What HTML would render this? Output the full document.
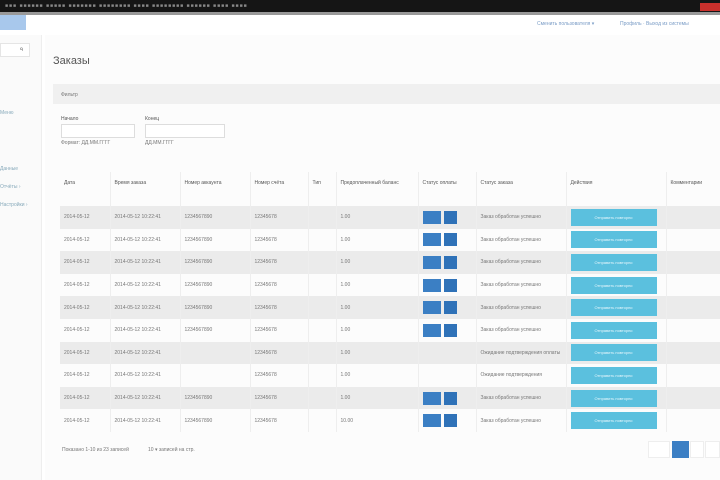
<!DOCTYPE html>
<html><head><meta charset="utf-8"><style>
*{margin:0;padding:0;box-sizing:border-box}
body{width:720px;height:480px;overflow:hidden;background:#fff;font-family:"Liberation Sans",sans-serif;position:relative;color:#666}
.a{position:absolute}
.t{font-size:5px;color:#777;white-space:nowrap}
table{position:absolute;left:60px;top:172px;border-collapse:collapse;table-layout:fixed;width:660px}
td,th{font-size:5px;color:#777;border-right:1px solid #eee;padding:0 4px;text-align:left;white-space:nowrap;overflow:hidden;font-weight:normal}
th{height:34px;vertical-align:top;padding-top:8px;color:#555}
td{height:22.6px}
tr.g td{background:#ebebeb}
.b1{display:inline-block;width:18px;height:13px;background:#3b7fc4;vertical-align:middle}
.b2{display:inline-block;width:13px;height:13px;background:#2f72b8;margin-left:3px;vertical-align:middle}
.c{display:block;width:86px;height:17px;background:#5bc0de;font-size:4px;color:#e8f7fc;line-height:17px;text-align:center}
</style></head><body>
<div class="a" style="left:0;top:0;width:720px;height:12px;background:#151515"></div>
<div class="a" style="left:0;top:12px;width:720px;height:3px;background:#999"></div>
<div class="a" style="left:700px;top:3px;width:20px;height:8px;background:#c9302c"></div>
<div class="a t" style="left:5px;top:3px;color:#888;letter-spacing:1px">■■■ ■■■■■■ ■■■■■ ■■■■■■■ ■■■■■■■■ ■■■■ ■■■■■■■■ ■■■■■■ ■■■■ ■■■■</div>
<div class="a" style="left:0;top:15px;width:26px;height:15px;background:#a8c8ec"></div>
<div class="a t" style="left:537px;top:21px;color:#7a9cc6">Сменить пользователя ▾</div>
<div class="a t" style="left:620px;top:21px;color:#7a9cc6">Профиль · Выход из системы</div>
<div class="a" style="left:0;top:35px;width:42px;height:445px;background:#fafafa;border-right:1px solid #eee"></div>
<div class="a" style="left:0;top:43px;width:30px;height:14px;background:#fff;border:1px solid #e5e5e5"></div>
<div class="a t" style="left:20px;top:47px">ᑫ</div>
<div class="a t" style="left:0;top:110px;color:#8ab">Меню</div>
<div class="a t" style="left:0;top:166px;color:#8ab">Данные</div>
<div class="a t" style="left:0;top:184px;color:#8ab">Отчёты ›</div>
<div class="a t" style="left:0;top:202px;color:#8ab">Настройки ›</div>
<div class="a" style="left:45px;top:35px;width:675px;height:445px;background:#fcfcfc"></div>
<div class="a" style="left:53px;top:55px;font-size:11px;color:#555">Заказы</div>
<div class="a" style="left:53px;top:84px;width:667px;height:20px;background:#f0f0f0"></div>
<div class="a t" style="left:61px;top:92px">Фильтр</div>
<div class="a t" style="left:61px;top:116px;color:#555">Начало</div>
<div class="a" style="left:61px;top:124px;width:74px;height:14px;border:1px solid #ddd;background:#fff"></div>
<div class="a t" style="left:61px;top:140px">Формат: ДД.ММ.ГГГГ</div>
<div class="a t" style="left:145px;top:116px;color:#555">Конец</div>
<div class="a" style="left:145px;top:124px;width:80px;height:14px;border:1px solid #ddd;background:#fff"></div>
<div class="a t" style="left:145px;top:140px">ДД.ММ.ГГГГ</div>
<table>
<colgroup><col style="width:50px"><col style="width:70px"><col style="width:70px"><col style="width:58px"><col style="width:28px"><col style="width:82px"><col style="width:58px"><col style="width:90px"><col style="width:100px"><col style="width:54px"></colgroup>
<tr><th>Дата</th><th>Время заказа</th><th>Номер аккаунта</th><th>Номер счёта</th><th>Тип</th><th>Предоплаченный баланс</th><th>Статус оплаты</th><th>Статус заказа</th><th>Действия</th><th>Комментарии</th></tr>
<tr class="g"><td>2014-05-12</td><td>2014-05-12 10:22:41</td><td>1234567890</td><td>12345678</td><td></td><td>1.00</td><td><span class="b1"></span><span class="b2"></span></td><td>Заказ обработан успешно</td><td><span class="c">Отправить повторно</span></td><td></td></tr>
<tr><td>2014-05-12</td><td>2014-05-12 10:22:41</td><td>1234567890</td><td>12345678</td><td></td><td>1.00</td><td><span class="b1"></span><span class="b2"></span></td><td>Заказ обработан успешно</td><td><span class="c">Отправить повторно</span></td><td></td></tr>
<tr class="g"><td>2014-05-12</td><td>2014-05-12 10:22:41</td><td>1234567890</td><td>12345678</td><td></td><td>1.00</td><td><span class="b1"></span><span class="b2"></span></td><td>Заказ обработан успешно</td><td><span class="c">Отправить повторно</span></td><td></td></tr>
<tr><td>2014-05-12</td><td>2014-05-12 10:22:41</td><td>1234567890</td><td>12345678</td><td></td><td>1.00</td><td><span class="b1"></span><span class="b2"></span></td><td>Заказ обработан успешно</td><td><span class="c">Отправить повторно</span></td><td></td></tr>
<tr class="g"><td>2014-05-12</td><td>2014-05-12 10:22:41</td><td>1234567890</td><td>12345678</td><td></td><td>1.00</td><td><span class="b1"></span><span class="b2"></span></td><td>Заказ обработан успешно</td><td><span class="c">Отправить повторно</span></td><td></td></tr>
<tr><td>2014-05-12</td><td>2014-05-12 10:22:41</td><td>1234567890</td><td>12345678</td><td></td><td>1.00</td><td><span class="b1"></span><span class="b2"></span></td><td>Заказ обработан успешно</td><td><span class="c">Отправить повторно</span></td><td></td></tr>
<tr class="g"><td>2014-05-12</td><td>2014-05-12 10:22:41</td><td></td><td>12345678</td><td></td><td>1.00</td><td></td><td>Ожидание подтверждения оплаты</td><td><span class="c">Отправить повторно</span></td><td></td></tr>
<tr><td>2014-05-12</td><td>2014-05-12 10:22:41</td><td></td><td>12345678</td><td></td><td>1.00</td><td></td><td>Ожидание подтверждения</td><td><span class="c">Отправить повторно</span></td><td></td></tr>
<tr class="g"><td>2014-05-12</td><td>2014-05-12 10:22:41</td><td>1234567890</td><td>12345678</td><td></td><td>1.00</td><td><span class="b1"></span><span class="b2"></span></td><td>Заказ обработан успешно</td><td><span class="c">Отправить повторно</span></td><td></td></tr>
<tr><td>2014-05-12</td><td>2014-05-12 10:22:41</td><td>1234567890</td><td>12345678</td><td></td><td>10.00</td><td><span class="b1"></span><span class="b2"></span></td><td>Заказ обработан успешно</td><td><span class="c">Отправить повторно</span></td><td></td></tr>
</table>
<div class="a t" style="left:62px;top:447px">Показано 1-10 из 23 записей</div>
<div class="a t" style="left:148px;top:447px">10 ▾ записей на стр.</div>
<div class="a" style="left:648px;top:441px;width:22px;height:17px;border:1px solid #eee;background:#fff"></div>
<div class="a" style="left:672px;top:441px;width:17px;height:17px;background:#3b7fc4"></div>
<div class="a" style="left:690px;top:441px;width:14px;height:17px;border:1px solid #eee;background:#fff"></div>
<div class="a" style="left:705px;top:441px;width:15px;height:17px;border:1px solid #eee;background:#fff"></div>
</body></html>
